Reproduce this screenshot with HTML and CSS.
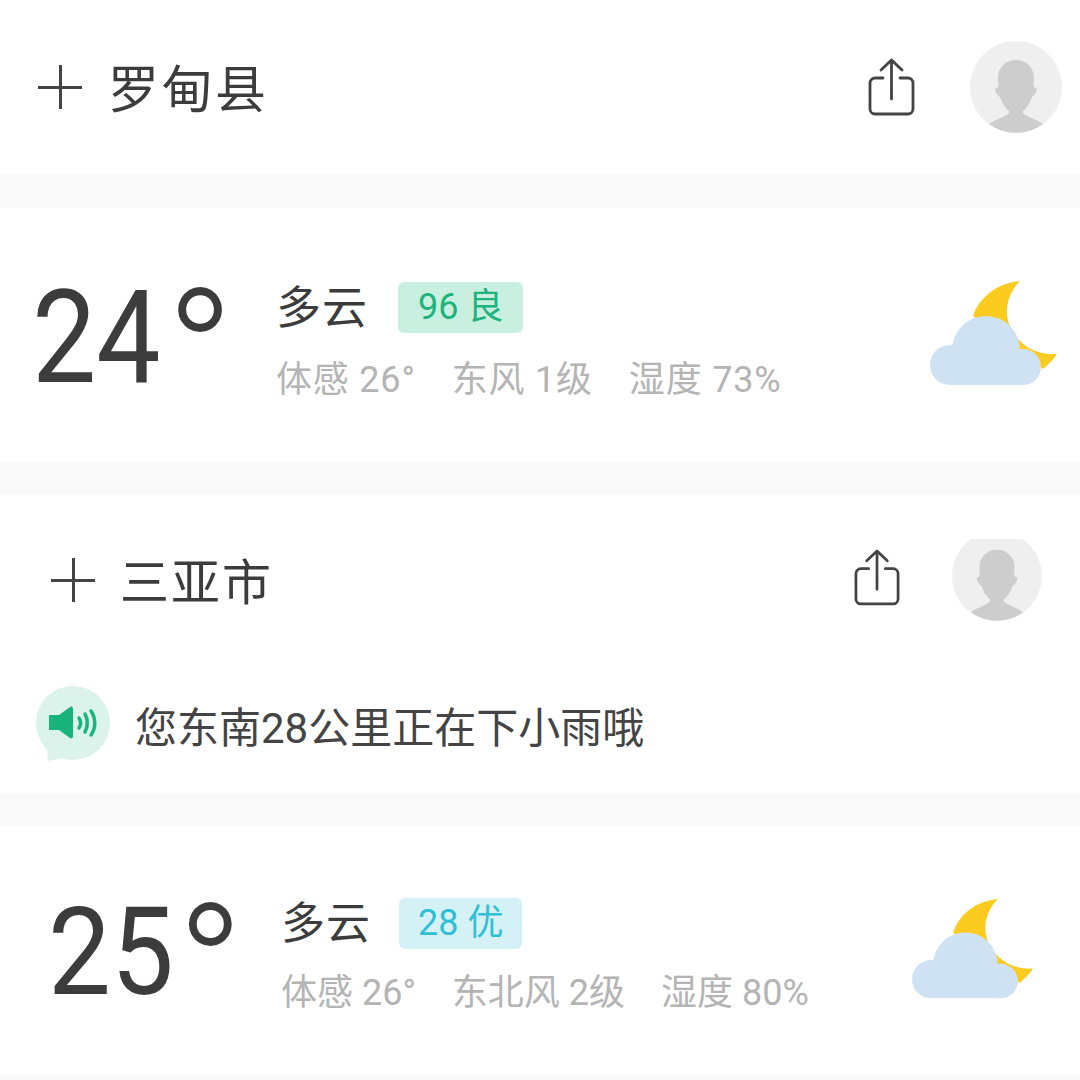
FILE: index.html
```html
<!DOCTYPE html>
<html lang="zh-CN">
<head>
    <meta charset="UTF-8">
    <meta name="viewport" content="width=device-width, initial-scale=1.0">
    <title>天气</title>
    <link rel="stylesheet" href="styles.css">
</head>
<body>
    <section class="city-head first-head">
        <span class="plus"></span>
        <h2 class="city-name">罗甸县</h2>
        <svg class="share" width="50" height="60" viewBox="0 0 50 60"><path d="M16 21H8a5 5 0 0 0-5 5v26a5 5 0 0 0 5 5h33a5 5 0 0 0 5-5V26a5 5 0 0 0-5-5h-8M24.500 42V4M14 13L24.500 3 35 13" fill="none" stroke="#444" stroke-width="2.800" stroke-linecap="round" stroke-linejoin="round"/></svg>
        <svg class="avatar" width="92" height="92" viewBox="0 0 92 92"><circle cx="46" cy="46" r="46" fill="#efefef"/><path d="M46 19c-11 0-18 8-18 18 0 4 1 6 0 9l-3 2c1 5 3 7 5 8 2 6 5 11 9 14v2c-4 4-13 6-20 11a46 46 0 0 0 54 0c-7-5-16-7-20-11v-2c4-3 7-8 9-14 2-1 4-3 5-8l-3-2c-1-3 0-5 0-9 0-10-7-18-18-18z" fill="#cdcdcd"/></svg>
    </section>
    <div class="divider"></div>
    <section class="weather first-weather">
        <div class="temp"><span class="digits">24</span><span class="degree">°</span></div>
        <div class="info">
            <div class="info-top">
                <span class="desc">多云</span>
                <span class="aqi aqi-good">96 良</span>
            </div>
            <div class="details">
                <span>体感 26°</span>
                <span>东风 1级</span>
                <span>湿度 73%</span>
            </div>
        </div>
        <svg class="weather-icon" width="130" height="108" viewBox="0 0 130 108"><path d="M43 35C50 15 68 2 90 0 76 14 72 36 84 52c8 14 24 22 43 21-5 7-9 11-14 15z" fill="#fccb20"/><g fill="#cfe2f3"><circle cx="20" cy="84" r="20"/><circle cx="56" cy="69" r="34"/><circle cx="93" cy="86" r="18"/><rect x="20" y="69" width="73" height="35"/></g></svg>
    </section>
    <div class="divider second-divider"></div>
    <section class="city-head second-head">
        <span class="plus"></span>
        <h2 class="city-name small-name">三亚市</h2>
        <svg class="share share-small" width="49" height="59" viewBox="0 0 50 60"><path d="M16 21H8a5 5 0 0 0-5 5v26a5 5 0 0 0 5 5h33a5 5 0 0 0 5-5V26a5 5 0 0 0-5-5h-8M24.500 42V4M14 13L24.500 3 35 13" fill="none" stroke="#444" stroke-width="2.800" stroke-linecap="round" stroke-linejoin="round"/></svg>
        <svg class="avatar avatar-small" width="90" height="82" viewBox="0 8 92 84"><circle cx="46" cy="46" r="46" fill="#efefef"/><path d="M46 19c-11 0-18 8-18 18 0 4 1 6 0 9l-3 2c1 5 3 7 5 8 2 6 5 11 9 14v2c-4 4-13 6-20 11a46 46 0 0 0 54 0c-7-5-16-7-20-11v-2c4-3 7-8 9-14 2-1 4-3 5-8l-3-2c-1-3 0-5 0-9 0-10-7-18-18-18z" fill="#cdcdcd"/></svg>
    </section>
    <section class="notice">
        <svg class="notice-icon" width="76" height="76" viewBox="0 0 76 76"><circle cx="38" cy="37" r="37" fill="#dcf3ec"/><path d="M12 62l1 13 16-3z" fill="#dcf3ec"/><path d="M14 29h10l11-8c2-1 3 0 3 2v27c0 2-1 3-3 2l-11-8H14z" fill="#17b57c"/><path d="M44 32c2 3 2 7 0 10M50 28c3 5 3 13 0 18M56 25c5 7 5 17 0 24" fill="none" stroke="#17b57c" stroke-width="3.500" stroke-linecap="round"/></svg>
        <span class="notice-text">您东南28公里正在下小雨哦</span>
    </section>
    <div class="divider third-divider"></div>
    <section class="weather second-weather">
        <div class="temp"><span class="digits">25</span><span class="degree">°</span></div>
        <div class="info">
            <div class="info-top">
                <span class="desc">多云</span>
                <span class="aqi aqi-best">28 优</span>
            </div>
            <div class="details">
                <span>体感 26°</span>
                <span>东北风 2级</span>
                <span>湿度 80%</span>
            </div>
        </div>
        <svg class="weather-icon" width="124" height="103" viewBox="0 0 130 108"><path d="M43 35C50 15 68 2 90 0 76 14 72 36 84 52c8 14 24 22 43 21-5 7-9 11-14 15z" fill="#fccb20"/><g fill="#cfe2f3"><circle cx="20" cy="84" r="20"/><circle cx="56" cy="69" r="34"/><circle cx="93" cy="86" r="18"/><rect x="20" y="69" width="73" height="35"/></g></svg>
    </section>
    <div class="divider last-divider"></div>
</body>
</html>
```

FILE: styles.css
```css
body {
    margin: 0;
    height: 1080px;
    overflow: hidden;
    background-color: #fff;
    font-family: "Roboto", "Noto Sans CJK SC", sans-serif;
    color: #3c3c3c;
}
.divider {
    height: 35px;
    background-color: #fafafa;
}
.second-divider {
    height: 34px;
}
.third-divider {
    height: 33px;
}
.last-divider {
    height: 5px;
}
.city-head {
    display: flex;
    align-items: center;
}
.first-head {
    height: 173px;
    padding: 0 18px 0 38px;
}
.second-head {
    height: 170px;
    padding: 0 38px 0 51px;
}
.plus {
    position: relative;
    width: 44px;
    height: 44px;
    flex: none;
}
.plus::before, .plus::after {
    content: "";
    position: absolute;
    background-color: #444;
}
.plus::before {
    left: 0;
    right: 0;
    top: 21px;
    height: 3px;
}
.plus::after {
    top: 0;
    bottom: 0;
    left: 21px;
    width: 3px;
}
.city-name {
    flex: 1;
    margin: 0 0 2px 26px;
    font-size: 51px;
    font-weight: 400;
    letter-spacing: 2.500px;
}
.small-name {
    margin-left: 25px;
    margin-bottom: 4px;
    font-size: 49px;
    letter-spacing: 2px;
}
.share {
    margin-right: 53px;
}
.share-small {
    margin: 0 50px 6px 0;
}
.weather {
    display: flex;
    align-items: center;
}
.first-weather {
    height: 253px;
    padding: 0 20px 0 32px;
}
.second-weather {
    height: 249px;
    padding: 0 44px 0 48px;
}
.temp {
    display: flex;
    width: 244px;
    margin-top: 26px;
    font-size: 130px;
    line-height: 134px;
    flex: none;
}
.second-weather .temp {
    width: 233px;
    margin-top: 22px;
    font-size: 123px;
}
.digits {
    margin-right: -18px;
    transform: scaleX(0.88);
    transform-origin: left center;
}
.second-weather .digits {
    margin-right: -12px;
    transform: scaleX(0.91);
}
.degree {
    margin: 19px 0 0 5px;
    font-size: 184px;
    font-weight: 300;
    line-height: 134px;
}
.second-weather .degree {
    margin-left: 2px;
    font-size: 180px;
}
.info {
    flex: 1;
    align-self: flex-start;
    padding-top: 74px;
}
.second-weather .info {
    padding-top: 72px;
}
.info-top {
    display: flex;
    align-items: center;
    height: 51px;
    gap: 30px;
}
.second-weather .info-top {
    gap: 28px;
}
.desc {
    margin-top: 1px;
    font-size: 45px;
    line-height: 51px;
    letter-spacing: 1px;
}
.second-weather .desc {
    font-size: 44px;
}
.aqi {
    padding: 0 20px;
    line-height: 51px;
    font-size: 36px;
    border-radius: 6px;
}
.aqi-good {
    background-color: #c9efe0;
    color: #20b47c;
}
.aqi-best {
    padding: 0 19px;
    background-color: #d4f1f6;
    color: #30bfd6;
}
.details {
    display: flex;
    gap: 36px;
    margin-top: 25px;
    font-size: 36px;
    line-height: 44px;
    letter-spacing: 0.800px;
    color: #b4b4b4;
}
.second-weather .details {
    margin-top: 22px;
    letter-spacing: 0;
}
.notice {
    display: flex;
    align-items: center;
    height: 128px;
    padding-left: 35px;
}
.notice-icon {
    margin-top: -10px;
}
.notice-text {
    margin: 0 0 10px 24px;
    font-size: 42px;
    color: #444;
}
```
